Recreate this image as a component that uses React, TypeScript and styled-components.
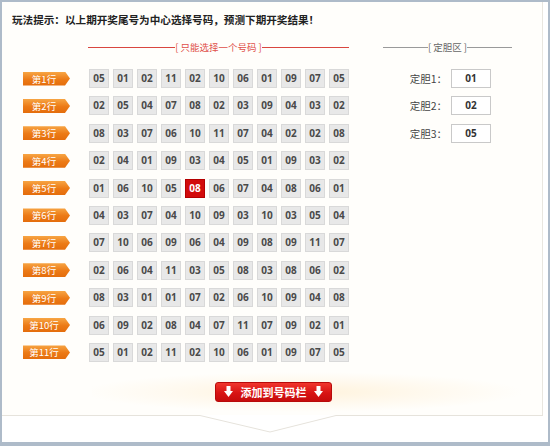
import React from "react";
import styled, { createGlobalStyle } from "styled-components";

const Global = createGlobalStyle`
  html, body { margin: 0; padding: 0; background: #fff; }
  body { font-family: "Noto Sans CJK SC", "Noto Sans", sans-serif; }
`;

const ROWS: string[][] = [
  "05 01 02 11 02 10 06 01 09 07 05",
  "02 05 04 07 08 02 03 09 04 03 02",
  "08 03 07 06 10 11 07 04 02 02 08",
  "02 04 01 09 03 04 05 01 09 03 02",
  "01 06 10 05 08 06 07 04 08 06 01",
  "04 03 07 04 10 09 03 10 03 05 04",
  "07 10 06 09 06 04 09 08 09 11 07",
  "02 06 04 11 03 05 08 03 08 06 02",
  "08 03 01 01 07 02 06 10 09 04 08",
  "06 09 02 08 04 07 11 07 09 02 01",
  "05 01 02 11 02 10 06 01 09 07 05",
].map((r) => r.split(" "));

const SELECTED = { row: 4, col: 4 };
const DAN = ["01", "02", "05"];

const Frame = styled.div`
  width: 550px;
  height: 446px;
  box-sizing: border-box;
  border: 2px solid #aebbc9;
  border-bottom-width: 4px;
  background: #fff;
  display: flex;
  flex-direction: column;
  overflow: hidden;
`;

const Panel = styled.div`
  width: 541px;
  height: 413px;
  box-sizing: border-box;
  border-right: 1px solid #e9e6df;
  background: #fffefb;
  padding: 11px 0 0 10px;
  display: flex;
  flex-direction: column;
`;

const Title = styled.div`
  font-size: 10.6px;
  line-height: 14px;
  font-weight: bold;
  color: #222;
`;

const Main = styled.div`
  display: flex;
  margin-top: 14px;
`;

const LeftSection = styled.div`
  width: 337px;
  display: flex;
  flex-direction: column;
`;

const RightSection = styled.div`
  width: 129px;
  margin-left: 34px;
  display: flex;
  flex-direction: column;
`;

const Divider = styled.div<{ $tone: "red" | "gray"; $offset: number; $width: number }>`
  margin-left: ${(p) => p.$offset}px;
  width: ${(p) => p.$width}px;
  height: 12px;
  display: flex;
  align-items: center;
  font-size: 9.5px;
  line-height: 12px;
  color: ${(p) => (p.$tone === "red" ? "#e0504a" : "#666")};
  white-space: nowrap;
  &::before,
  &::after {
    content: "";
    flex: 1;
    height: 1px;
    background: ${(p) => (p.$tone === "red" ? "#d9463f" : "#9a9a9a")};
  }
`;

const Rows = styled.div`
  margin-top: 16px;
  display: flex;
  flex-direction: column;
  gap: 8.4px;
`;

const Row = styled.div`
  display: flex;
  align-items: center;
  height: 19px;
`;

const Tag = styled.div`
  margin-left: 11px;
  margin-right: 19px;
  width: 47px;
  height: 14px;
  box-sizing: border-box;
  padding-right: 5px;
  background: linear-gradient(#f7a544, #ec7a16 55%, #e46d0c);
  clip-path: polygon(0 0, calc(100% - 5px) 0, 100% 50%, calc(100% - 5px) 100%, 0 100%);
  color: #fff;
  font-size: 9.5px;
  line-height: 14px;
  text-align: center;
  white-space: nowrap;
`;

const Cells = styled.div`
  display: flex;
  gap: 4px;
`;

const Cell = styled.div<{ $active?: boolean }>`
  width: 20px;
  height: 19px;
  box-sizing: border-box;
  border: 1px solid ${(p) => (p.$active ? "#b40000" : "#d9d9d9")};
  background: ${(p) => (p.$active ? "#d20b0b" : "#e8e8e8")};
  color: ${(p) => (p.$active ? "#fff" : "#4a4a4a")};
  font-family: "Open Sans", "Liberation Sans", sans-serif;
  font-weight: 700;
  font-size: 10px;
  line-height: 17px;
  text-align: center;
`;

const DanRow = styled.div`
  display: flex;
  align-items: center;
  justify-content: flex-end;
  padding-right: 21px;
  height: 19px;
`;

const DanLabel = styled.span`
  font-size: 10.5px;
  color: #444;
  margin-right: 4px;
  white-space: nowrap;
`;

const DanInput = styled.div`
  width: 40px;
  height: 19px;
  box-sizing: border-box;
  border: 1px solid #c9c9c9;
  background: #fff;
  color: #333;
  font-family: "Open Sans", "Liberation Sans", sans-serif;
  font-weight: 700;
  font-size: 10px;
  line-height: 17px;
  text-align: center;
`;

const ButtonBar = styled.div`
  margin: 10px 0 0 80px;
  width: 440px;
  height: 40px;
  display: flex;
  align-items: center;
  padding-left: 123px;
  box-sizing: border-box;
  background: radial-gradient(ellipse 50% 50% at 48% 50%, #fff3dc 0%, #fff9ee 55%, rgba(255, 255, 255, 0) 100%);
`;

const AddButton = styled.button`
  width: 117px;
  height: 20px;
  box-sizing: border-box;
  border: 1px solid #b80a0a;
  border-radius: 3px;
  background: linear-gradient(#f0362c, #d81414 55%, #c60c0c);
  color: #fff;
  font-family: "Noto Sans CJK SC", sans-serif;
  font-weight: bold;
  font-size: 11px;
  line-height: 18px;
  padding: 0 8px;
  display: flex;
  align-items: center;
  justify-content: space-between;
  cursor: pointer;
`;

const BottomDeco = styled.svg`
  display: block;
  width: 546px;
  height: 27px;
`;

const DownArrow = () => (
  <svg width="9" height="11" viewBox="0 0 9 11">
    <rect x="2.5" y="0" width="4" height="5.5" fill="#fff" />
    <polygon points="0,5 9,5 4.5,11" fill="#fff" />
  </svg>
);

export default function App() {
  return (
    <>
      <Global />
      <Frame>
        <Panel>
          <Title>玩法提示：以上期开奖尾号为中心选择号码，预测下期开奖结果！</Title>
          <Main>
            <LeftSection>
              <Divider $tone="red" $offset={76} $width={261}>
                [ 只能选择一个号码 ]
              </Divider>
              <Rows>
                {ROWS.map((row, ri) => (
                  <Row key={ri}>
                    <Tag>第{ri + 1}行</Tag>
                    <Cells>
                      {row.map((n, ci) => (
                        <Cell key={ci} $active={ri === SELECTED.row && ci === SELECTED.col}>
                          {n}
                        </Cell>
                      ))}
                    </Cells>
                  </Row>
                ))}
              </Rows>
            </LeftSection>
            <RightSection>
              <Divider $tone="gray" $offset={0} $width={129}>
                [ 定胆区 ]
              </Divider>
              <Rows>
                {DAN.map((d, i) => (
                  <DanRow key={i}>
                    <DanLabel>定胆{i + 1}：</DanLabel>
                    <DanInput>{d}</DanInput>
                  </DanRow>
                ))}
              </Rows>
            </RightSection>
          </Main>
          <ButtonBar>
            <AddButton>
              <DownArrow />
              <span>添加到号码栏</span>
              <DownArrow />
            </AddButton>
          </ButtonBar>
        </Panel>
        <BottomDeco viewBox="0 0 546 27">
          <polyline
            points="0,0.5 198,0.5 268,17 334,0.5 541,0.5"
            fill="none"
            stroke="#e6e3dc"
            strokeWidth="1"
          />
        </BottomDeco>
      </Frame>
    </>
  );
}
